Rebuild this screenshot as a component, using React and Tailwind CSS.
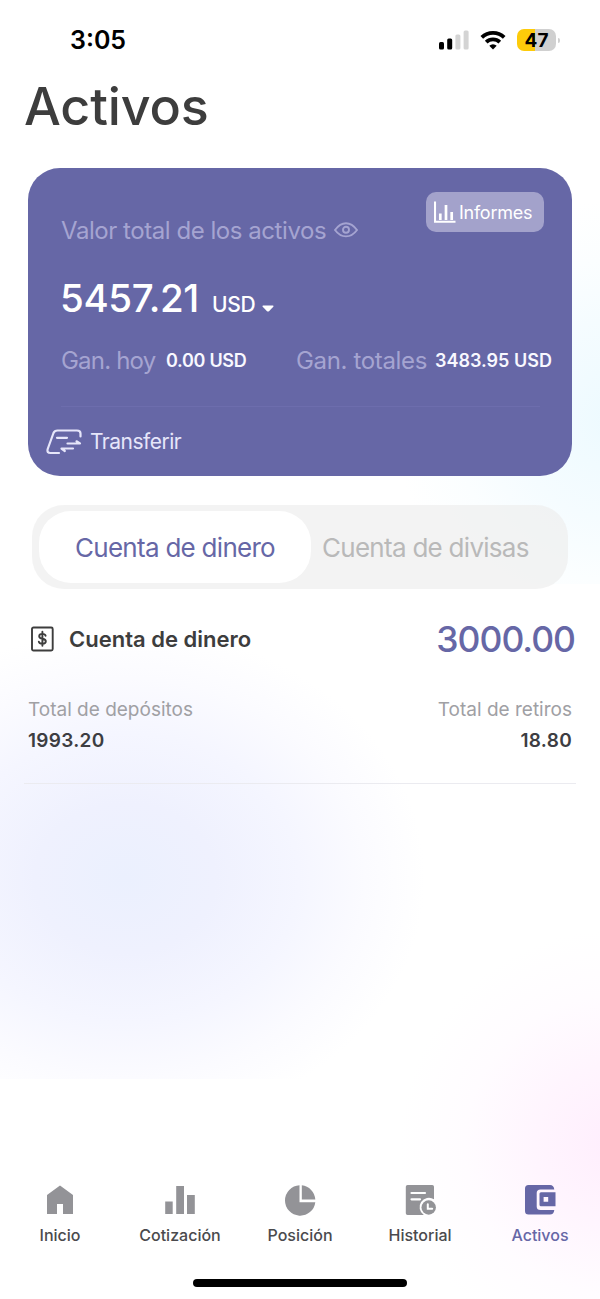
const NAV_ITEMS = [
  { label: 'Inicio', Icon: HomeIcon },
  { label: 'Cotización', Icon: BarsIcon },
  { label: 'Posición', Icon: PieIcon },
  { label: 'Historial', Icon: HistoryIcon },
  { label: 'Activos', Icon: WalletIcon, active: true },
]

function HomeIcon() {
  return (
    <svg width="32" height="32" viewBox="0 0 32 32" fill="currentColor">
      <path d="M16 1.5 29 11v19H19V20h-6v10H3V11z" />
    </svg>
  )
}

function BarsIcon() {
  return (
    <svg width="32" height="32" viewBox="0 0 32 32" fill="currentColor">
      <path d="M1.2 17.5h7.5V30H1.2zM12.2 2h7.800v28h-7.800zM23 11h7.800v19H23z" />
    </svg>
  )
}

function PieIcon() {
  return (
    <svg width="32" height="32" viewBox="0 0 32 32" fill="currentColor">
      <path d="M15.500 1.300A15.200 15.200 0 1 0 31.300 18.200H15.500z" />
      <path d="M17.800 1.300a15.200 15.200 0 0 1 13.500 14.200H17.800z" />
    </svg>
  )
}

function HistoryIcon() {
  return (
    <svg width="32" height="32" viewBox="0 0 32 32" fill="none">
      <path d="M3.600 1h24.600q1.800 0 1.800 1.800v12.500a8.600 8.600 0 0 0-10.200 15.700H3.600q-1.800 0-1.800-1.800V2.800Q1.800 1 3.600 1z" fill="currentColor" />
      <path d="M7.500 9h13.500M7.500 15.300h8.500" stroke="#fff" strokeWidth="2.200" strokeLinecap="round" />
      <circle cx="24.700" cy="23.500" r="7.200" fill="currentColor" />
      <path d="M23.800 20.300v4.500h4.400" stroke="#fff" strokeWidth="2" strokeLinecap="round" />
    </svg>
  )
}

function WalletIcon() {
  return (
    <svg width="32" height="32" viewBox="0 0 32 32" fill="currentColor">
      <path d="M4.500 1H26q3.800 0 4.300 4.500H16.500q-3.800 0-3.800 3.500v13.500q0 3.500 3.800 3.500h13.800q-.5 4.500-4.300 4.500H4.500Q1 30.500 1 27V4.500Q1 1 4.500 1z" />
      <path fillRule="evenodd" d="M17 8.300H31.500v14H17q-1.500 0-1.500-1.500V9.800q0-1.500 1.500-1.500zm2.600 4.800v4.600h4.600v-4.600z" />
    </svg>
  )
}

function EyeIcon() {
  return (
    <svg width="24" height="16" viewBox="0 0 24 16" fill="none" stroke="currentColor" strokeWidth="1.900">
      <path d="M1 8C4.500 3.200 8 1.200 12 1.200S19.500 3.200 23 8c-3.500 4.800-7 6.400-11 6.400S4.500 12.800 1 8z" />
      <circle cx="12" cy="7.800" r="3" />
    </svg>
  )
}

function ReportIcon() {
  return (
    <svg width="22" height="22" viewBox="0 0 22 22" fill="none" stroke="currentColor">
      <path d="M1 .500V20.700h20.500" strokeWidth="2.100" />
      <path d="M6.300 12.500v6.500M12 4v15M17.700 11v8" strokeWidth="2.700" />
    </svg>
  )
}

function TransferIcon() {
  return (
    <svg width="36" height="26" viewBox="0 0 36 26" fill="none" stroke="currentColor" strokeWidth="2.200" strokeLinecap="round" strokeLinejoin="round">
      <path d="M34.500 7.500V4.500Q34.500 1.500 31 1.500H11.500Q8.500 1.500 7.500 4L1.700 20Q.600 24 4.500 24H13" />
      <path d="M11 8.800H21M21.500 14.500H34L30.500 12.300M27 19.500H15.500L18.800 22" />
    </svg>
  )
}

function MoneyIcon() {
  return (
    <svg width="23" height="26" viewBox="0 0 23 26" fill="none" stroke="currentColor" strokeWidth="1.900" strokeLinecap="round">
      <rect x="1" y="1.500" width="20.700" height="23" rx="1.500" />
      <path d="M14.600 9.800c-.3-1.300-1.400-1.900-3.200-1.900-1.900 0-3.200.800-3.200 2.300 0 3.500 6.600 1.700 6.600 5.100 0 1.700-1.400 2.500-3.400 2.500s-3.300-.8-3.600-2.200M11.400 5.800v14" />
    </svg>
  )
}

function StatusBar() {
  return (
    <header className="flex h-20 items-center justify-between pr-10 pl-[70px]">
      <span className="text-[25px] leading-none font-semibold text-black">3:05</span>
      <div className="flex items-center">
        <svg width="32" height="22" viewBox="0 0 32 22">
          <g fill="#000">
            <rect x="1" y="13" width="5" height="7.500" rx="1.500" />
            <rect x="9.200" y="9.500" width="5" height="11" rx="1.500" />
          </g>
          <g fill="#d4d4d4">
            <rect x="17.400" y="5.500" width="5" height="15" rx="1.500" />
            <rect x="25.600" y="1.500" width="5" height="19" rx="1.500" />
          </g>
        </svg>
        <svg className="ml-2.5" width="26" height="20" viewBox="0 0 26 20" fill="none" stroke="#000" strokeWidth="3.800">
          <path d="M1.800 7.300a16.200 16.200 0 0 1 22.400 0" />
          <path d="M6.200 12.200a9.800 9.800 0 0 1 13.600 0" />
          <path d="M13 19.600 9.300 15.800a5.300 5.300 0 0 1 7.400 0z" fill="#000" stroke="none" />
        </svg>
        <div className="ml-[11px] flex h-[22px] w-[39px] items-center justify-center rounded-[7px] bg-linear-to-r from-[#fdcb0a] from-47% to-[#d0d0d0] to-47% text-[19px] leading-none font-bold text-black">
          47
        </div>
        <div className="ml-0.5 h-[5px] w-[2px] rounded-r-full bg-[#d0d0d0]" />
      </div>
    </header>
  )
}

function Profit({ label, value, labelClass, valueClass }) {
  return (
    <div className="flex items-center whitespace-nowrap">
      <span className={`text-[24px] text-[#a5a4d1] ${labelClass}`}>{label}</span>
      <span className={`-mt-0.5 text-[18px] font-semibold text-[#f8f8ff] ${valueClass}`}>{value}</span>
    </div>
  )
}

function BalanceCard() {
  return (
    <section className="mx-7 mt-[31px] flex h-[308px] flex-col rounded-[32px] bg-[#6667a6] pl-[33px]">
      <div className="flex h-[78px] items-start justify-between pt-6 pr-7">
        <div className="mt-[22px] flex h-8 items-center text-[#a5a4d1]">
          <span className="mt-0.5 w-[273px] text-[24px] tracking-[-0.45px] whitespace-nowrap">Valor total de los activos</span>
          <EyeIcon />
        </div>
        <button className="flex h-10 w-[118px] shrink-0 items-center gap-[3px] rounded-[10px] bg-[#a3a2cb] pl-2 text-white">
          <ReportIcon />
          <span className="text-[18px] tracking-[-0.25px]">Informes</span>
        </button>
      </div>

      <div className="mt-7 -ml-px flex h-12 items-baseline text-white">
        <span className="w-[152px] text-[38.5px] leading-[48px] font-[550] tracking-[-0.35px]">5457.21</span>
        <span className="text-[21px] font-medium tracking-[-0.3px]">USD</span>
        <svg className="mb-0.5 ml-[7px]" width="12" height="7" viewBox="0 0 12 7" fill="currentColor">
          <path d="M1 .500h10q1 .300.300 1.200L7 6.200q-1 .800-2 0L.700 1.700Q0 .800 1 .500z" />
        </svg>
      </div>

      <div className="mt-[23px] flex h-8 items-center">
        <Profit label="Gan. hoy" value="0.00 USD" labelClass="w-[105px] tracking-[-0.8px]" valueClass="w-[130px] tracking-[-0.3px]" />
        <Profit label="Gan. totales" value="3483.95 USD" labelClass="w-[139px] tracking-[-0.35px]" />
      </div>

      <div className="mt-[29px] mr-8 h-px bg-[#6d6dad]" />

      <button className="mt-[19px] -ml-[15px] flex h-8 items-center gap-2 text-[#e6e6fa]">
        <TransferIcon />
        <span className="text-[21px] tracking-[-0.5px]">Transferir</span>
      </button>
    </section>
  )
}

function AccountTabs() {
  return (
    <div className="mx-8 mt-[29px] flex h-[84px] rounded-[32px] bg-[#eeeeee]/70 py-1.5 pl-[7px] text-[26px] tracking-[-0.72px] whitespace-nowrap">
      <button className="w-[272px] rounded-[32px] bg-white text-[#6667a6]">Cuenta de dinero</button>
      <button className="flex-1 text-left text-[#b9b9b9]">
        <span className="ml-[11px]">Cuenta de divisas</span>
      </button>
    </div>
  )
}

function AccountSummary() {
  return (
    <section>
      <div className="mt-[26px] flex h-12 items-center pr-[25px] pl-[31px] text-[#3d3d3d]">
        <MoneyIcon />
        <h2 className="ml-[15px] text-[22px] font-semibold">Cuenta de dinero</h2>
        <span className="mt-0.5 ml-auto text-[35.5px] font-medium tracking-[-1px] text-[#6667a6]">3000.00</span>
      </div>
      <div className="mx-7 mt-[31px] flex justify-between">
        <div>
          <p className="text-[19px] leading-[31px] text-[#a0a0a4]">Total de depósitos</p>
          <p className="text-[19px] leading-[31px] font-semibold tracking-[0.3px] text-[#3d3d42]">1993.20</p>
        </div>
        <div className="text-right">
          <p className="text-[19px] leading-[31px] text-[#a0a0a4]">Total de retiros</p>
          <p className="text-[19px] leading-[31px] font-semibold tracking-[0.3px] text-[#3d3d42]">18.80</p>
        </div>
      </div>
      <div className="mx-6 mt-[27px] h-px bg-[#ebebf0]" />
    </section>
  )
}

function BottomNav() {
  return (
    <nav className="mt-auto flex h-[115px]">
      {NAV_ITEMS.map(({ label, Icon, active }) => (
        <a key={label} className={`flex flex-1 flex-col items-center ${active ? 'text-[#6667a6]' : 'text-[#939397]'}`}>
          <Icon />
          <span className={`mt-[7px] text-[16px] leading-6 font-medium ${active ? '' : 'text-[#4a4a4d]'}`}>{label}</span>
        </a>
      ))}
    </nav>
  )
}

export default function App() {
  return (
    <div className="relative isolate flex h-[1299px] w-[600px] flex-col overflow-hidden bg-white font-[Inter,sans-serif]">
      {/* soft background glows */}
      <div className="absolute top-[580px] left-0 -z-10 h-[499px] w-[600px] bg-[radial-gradient(ellipse_300px_250px_at_125px_298px,#ebf0fe_0,#eff1fe_30%,#f5f6ff_58%,#fbfbff_80%,#ffffff_100%)]" />
      <div className="absolute top-[168px] right-0 -z-10 h-[416px] w-[230px] bg-[radial-gradient(circle_at_245px_252px,#edfaff_0,#f5fcff_100px,#fbfeff_160px,#ffffff_220px)]" />
      <div className="absolute top-[900px] right-0 -z-10 h-[399px] w-[220px] bg-[radial-gradient(circle_at_235px_245px,#ffeefd_0,#fff5fe_80px,#fffcff_150px,transparent_215px)]" />

      <StatusBar />
      <h1 className="ml-6 h-[57px] text-[52px] leading-[54px] font-medium tracking-[-0.15px] text-[#3d3d3d]">Activos</h1>
      <BalanceCard />
      <AccountTabs />
      <AccountSummary />
      <BottomNav />
      <div className="absolute bottom-[12px] left-[193px] h-2 w-[214px] rounded-full bg-black" />
    </div>
  )
}
